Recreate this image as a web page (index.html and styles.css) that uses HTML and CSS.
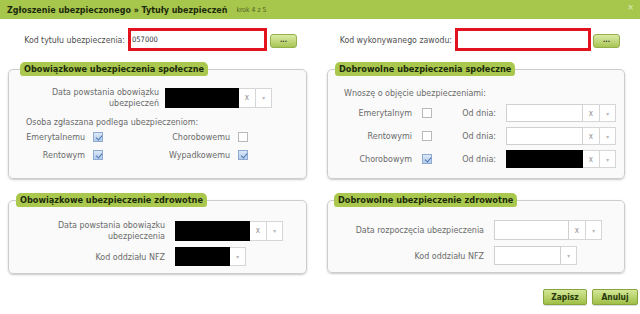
FILE: index.html
```html
<!DOCTYPE html>
<html lang="pl">
<head>
<meta charset="utf-8">
<title>Zgłoszenie ubezpieczonego</title>
<link rel="stylesheet" href="styles.css">
</head>
<body>
<div class="dialog">
  <div class="titlebar">
    <span class="title">Zgłoszenie ubezpieczonego » Tytuły ubezpieczeń</span>
    <span class="step">krok 4 z 5</span>
    <span class="close">×</span>
  </div>

  <div class="codes">
    <div class="code-field code-left">
      <label class="code-label">Kod tytułu ubezpieczenia:</label>
      <div class="code-input">057000</div>
      <button class="dots">...</button>
    </div>
    <div class="code-field code-right">
      <label class="code-label">Kod wykonywanego zawodu:</label>
      <div class="code-input"></div>
      <button class="dots">...</button>
    </div>
  </div>

  <div class="sections">
    <fieldset class="box box-os">
      <legend class="tag">Obowiązkowe ubezpieczenia społeczne</legend>
      <div class="box-body os-body">
        <div class="os-date">
          <div class="lbl-right two-line">Data powstania obowiązku<br>ubezpieczeń</div>
          <div class="date">
            <span class="field black w74"></span><span class="cell clr">x</span><span class="cell dd">▾</span>
          </div>
        </div>
        <div class="os-note">Osoba zgłaszana podlega ubezpieczeniom:</div>
        <div class="os-checks">
          <span class="lbl-right">Emerytalnemu</span><span class="cb checked"></span>
          <span class="lbl-right">Chorobowemu</span><span class="cb"></span>
          <span class="lbl-right">Rentowym</span><span class="cb checked"></span>
          <span class="lbl-right">Wypadkowemu</span><span class="cb checked"></span>
        </div>
      </div>
    </fieldset>

    <fieldset class="box box-ds">
      <legend class="tag">Dobrowolne ubezpieczenia społeczne</legend>
      <div class="box-body ds-body">
        <div class="ds-note">Wnoszę o objęcie ubezpieczeniami:</div>
        <div class="ds-rows">
          <span class="lbl-right">Emerytalnym</span><span class="cb"></span>
          <span class="lbl-right">Od dnia:</span>
          <div class="date small"><span class="field w77"></span><span class="cell clr">x</span><span class="cell dd">▾</span></div>

          <span class="lbl-right">Rentowymi</span><span class="cb"></span>
          <span class="lbl-right">Od dnia:</span>
          <div class="date small"><span class="field w77"></span><span class="cell clr">x</span><span class="cell dd">▾</span></div>

          <span class="lbl-right">Chorobowym</span><span class="cb checked"></span>
          <span class="lbl-right">Od dnia:</span>
          <div class="date small"><span class="field black w77"></span><span class="cell clr">x</span><span class="cell dd">▾</span></div>
        </div>
      </div>
    </fieldset>

    <fieldset class="box box-oz">
      <legend class="tag">Obowiązkowe ubezpieczenie zdrowotne</legend>
      <div class="box-body z-body">
        <div class="lbl-right two-line">Data powstania obowiązku<br>ubezpieczenia</div>
        <div class="date"><span class="field black w75"></span><span class="cell clr">x</span><span class="cell dd">▾</span></div>
        <div class="lbl-right">Kod oddziału NFZ</div>
        <div class="date"><span class="field black w55"></span><span class="cell dd">▾</span></div>
      </div>
    </fieldset>

    <fieldset class="box box-dz">
      <legend class="tag">Dobrowolne ubezpieczenie zdrowotne</legend>
      <div class="box-body z-body">
        <div class="lbl-right">Data rozpoczęcia ubezpieczenia</div>
        <div class="date"><span class="field w75"></span><span class="cell clr">x</span><span class="cell dd">▾</span></div>
        <div class="lbl-right">Kod oddziału NFZ</div>
        <div class="date"><span class="field w67"></span><span class="cell dd">▾</span></div>
      </div>
    </fieldset>
  </div>

  <div class="footer">
    <button class="btn btn-save">Zapisz</button>
    <button class="btn btn-cancel">Anuluj</button>
  </div>
</div>
</body>
</html>
```

FILE: styles.css
```css
* { box-sizing: border-box; }

html, body {
  margin: 0;
  padding: 0;
  background: #ffffff;
}

body {
  width: 640px;
  height: 314px;
  overflow: hidden;
  font-family: "DejaVu Sans Condensed", "DejaVu Sans", sans-serif;
  font-size: 8.9px;
  color: #6a6a6a;
}

.dialog {
  width: 640px;
  height: 314px;
  display: flex;
  flex-direction: column;
}

/* Title bar */
.titlebar {
  height: 19px;
  flex: none;
  background: #a7c64c;
  display: flex;
  align-items: center;
  padding: 0 6px 0 7px;
}

.title {
  font-weight: bold;
  color: #1c2a0c;
  font-size: 8.9px;
}

.step {
  margin-left: 9px;
  font-size: 6.8px;
  color: #4e5f22;
}

.close {
  margin-left: auto;
  color: #dfe9c2;
  font-size: 9px;
  align-self: flex-start;
  margin-top: 2px;
}

/* Code fields */
.codes {
  display: grid;
  grid-template-columns: 299px 298px;
  column-gap: 20px;
  padding: 9px 0 0 8px;
}

.code-field {
  display: flex;
  align-items: center;
}

.code-label {
  text-align: right;
  color: #4f4f4f;
  font-size: 8.7px;
  white-space: nowrap;
  margin-right: 3px;
}

.code-left .code-label { width: 117px; }
.code-right .code-label { width: 125px; }

.code-input {
  height: 23px;
  border: 3px solid #e2131f;
  background: #ffffff;
  font-size: 7.5px;
  color: #333333;
  padding-left: 1px;
  display: flex;
  align-items: center;
}

.code-left .code-input { width: 139px; }
.code-right .code-input { width: 136px; }

.dots {
  margin-top: 3px;
  width: 27px;
  height: 14px;
  padding: 0 0 3px;
  border: 1px solid #93b04a;
  border-radius: 3px;
  background: linear-gradient(#dbeba5, #a9c554);
  color: #333333;
  font-family: inherit;
  font-size: 7px;
  font-weight: bold;
  line-height: 8px;
  display: flex;
  align-items: flex-end;
  justify-content: center;
}

.code-left .dots { margin-left: 3px; }
.code-right .dots { margin-left: 2px; }

/* Sections */
.sections {
  display: grid;
  grid-template-columns: 299px 298px;
  column-gap: 20px;
  row-gap: 14px;
  align-items: start;
  padding-left: 8px;
  margin-top: 11px;
}

.box {
  margin: 0;
  padding: 0;
  min-width: 0;
  border: 1px solid #cdcdcd;
  border-radius: 5px;
  background: #fafafa;
  box-shadow: 0 1px 2px rgba(0, 0, 0, 0.22);
}

.tag {
  height: 14px;
  line-height: 14px;
  padding: 0 4px;
  background: #a9c84d;
  color: #1c2a0c;
  font-weight: bold;
  font-size: 9.1px;
  border-radius: 5px 5px 3px 3px;
}

.box-os .tag { margin-left: 11px; }
.box-ds .tag { margin-left: 7px; }
.box-oz .tag { margin-left: 7px; }
.box-dz .tag { margin-left: 6px; }

.lbl-right {
  text-align: right;
  white-space: nowrap;
}

.two-line {
  line-height: 10.5px;
}

/* Date widgets */
.date {
  display: flex;
  height: 20px;
}

.date.small { height: 18px; }

.field {
  height: 100%;
  background: #ffffff;
  border: 1px solid #d0d0d0;
}

.field.black {
  background: #000000;
  border-color: #000000;
}

.w74 { width: 74px; }
.w75 { width: 75px; }
.w77 { width: 77px; }
.w55 { width: 55px; }
.w67 { width: 67px; }

.cell {
  width: 16px;
  height: 100%;
  border: 1px solid #d6d6d6;
  border-left: none;
  background: #ffffff;
  display: flex;
  align-items: center;
  justify-content: center;
  color: #a0a0a0;
}

.cell.clr {
  width: 17px;
  font-size: 8px;
  color: #8f8f8f;
}

.cell.dd {
  font-size: 6px;
  color: #b4b4b4;
}

/* Checkboxes */
.cb {
  display: block;
  width: 10px;
  height: 10px;
  border: 1px solid #b9b9b9;
  background: #ffffff;
  position: relative;
}

.cb.checked {
  border-color: #8eaad0;
  background: linear-gradient(#dbe8f7, #b4cbe8);
}

.cb.checked::after {
  content: "";
  position: absolute;
  left: 2.5px;
  top: 0.5px;
  width: 3px;
  height: 5px;
  border-right: 1.4px solid #4d78b6;
  border-bottom: 1.4px solid #4d78b6;
  transform: rotate(40deg);
}

/* Obowiązkowe społeczne */
.os-body {
  padding: 11px 0 14px 17px;
}

.os-date {
  display: grid;
  grid-template-columns: 133px auto;
  column-gap: 6px;
  align-items: center;
}

.os-note {
  margin-top: 9px;
  line-height: 11px;
}

.os-checks {
  display: grid;
  grid-template-columns: 59px 10px 119px 10px;
  grid-auto-rows: 18px;
  column-gap: 8px;
  align-items: center;
}

/* Dobrowolne społeczne */
.ds-body {
  padding: 12px 0 10px 16px;
}

.ds-note {
  line-height: 11px;
}

.ds-rows {
  margin-top: 5px;
  display: grid;
  grid-template-columns: 68px 10px 54px auto;
  grid-auto-rows: 18px;
  column-gap: 10px;
  row-gap: 5px;
  align-items: center;
}

/* Zdrowotne */
.z-body {
  display: grid;
  grid-template-columns: 139px auto;
  column-gap: 10px;
  row-gap: 6px;
  align-items: center;
  justify-items: start;
  padding: 13px 0 7px 17px;
}

.z-body .lbl-right { justify-self: end; }

.z-body .date:last-child { height: 19px; }

/* Footer */
.footer {
  display: flex;
  justify-content: flex-end;
  gap: 5px;
  padding-right: 2px;
  margin-top: 15px;
}

.btn {
  height: 16px;
  padding: 0;
  border: 1px solid #86a53c;
  border-radius: 2px;
  background: linear-gradient(#d4e797, #9fbf46);
  color: #27380c;
  font-family: inherit;
  font-weight: bold;
  font-size: 8.4px;
  box-shadow: 0 1px 1px rgba(0, 0, 0, 0.15);
}

.btn-save { width: 44px; }
.btn-cancel { width: 46px; }
```
